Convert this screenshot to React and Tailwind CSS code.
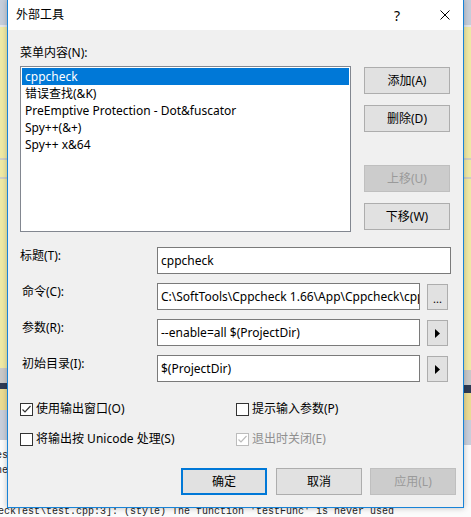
import React from 'react';

const ui = "font-['Noto_Sans','Noto_Sans_CJK_SC',sans-serif] text-[12px] text-black";

function Btn({ children, disabled, primary, className = '' }) {
  const base = 'flex items-center justify-center h-[27px] w-[86px]';
  const look = disabled
    ? 'bg-[#cccccc] border border-[#bfbfbf] text-[#9a9a9a]'
    : primary
    ? 'bg-[#e1e1e1] border-2 border-[#0078d7] text-black'
    : 'bg-[#e1e1e1] border border-[#adadad] text-black';
  return <div className={`${base} ${look} ${className}`}>{children}</div>;
}

function Check({ checked, disabled, label }) {
  const color = disabled ? '#bcbcbc' : '#333333';
  return (
    <div className="flex items-center h-[16px]">
      <div
        className={`w-[13px] h-[13px] border bg-white flex items-center justify-center ${
          disabled ? 'border-[#bcbcbc]' : 'border-[#333333]'
        }`}
      >
        {checked && (
          <svg width="11" height="11" viewBox="0 0 11 11">
            <polyline points="1.5,5.5 4,8 9.5,2" fill="none" stroke={color} strokeWidth="1.2" />
          </svg>
        )}
      </div>
      <span className={`ml-[3px] leading-[16px] ${disabled ? 'text-[#8f8f8f]' : ''}`}>{label}</span>
    </div>
  );
}

function SideBtn({ children }) {
  return (
    <div className="ml-[7px] mt-[1px] w-[21px] h-[26px] bg-[#e1e1e1] border border-[#adadad] flex items-center justify-center">
      {children}
    </div>
  );
}

function Arrow() {
  return (
    <svg width="6" height="9" viewBox="0 0 6 9">
      <polygon points="0,0 5,4.5 0,9" fill="#000" />
    </svg>
  );
}

function Field({ label, value, side, wide, indent }) {
  return (
    <div className="flex items-start h-[27px]">
      <div className={`w-[137px] mt-[1px] leading-[16px] ${indent ? 'pl-[2px]' : ''}`}>{label}</div>
      <div
        className={`h-[27px] ${wide ? 'w-[294px]' : 'w-[263px]'} bg-white border border-[#7a7a7a] flex items-center px-[3px] overflow-hidden whitespace-nowrap`}
      >
        {value}
      </div>
      {side}
    </div>
  );
}

const items = ['cppcheck', '错误查找(&K)', 'PreEmptive Protection - Dot&fuscator', 'Spy++(&+)', 'Spy++ x&64'];

export default function App() {
  return (
    <div className="relative w-[471px] h-[517px] overflow-hidden bg-[#fbfbfb]">
      {/* desktop behind the dialog */}
      <div className="flex h-full justify-between">
        <div className="w-[7px] flex flex-col overflow-hidden">
          <div className="h-[25px] bg-[#c6cedb]" />
          <div className="h-[2px] bg-[#e4e7ec]" />
          <div className="h-[131px] bg-[#f0eaa5]" />
          <div className="h-[2px] bg-[#cfcfc4]" />
          <div className="h-[17px] bg-[#f0eaa5]" />
          <div className="h-[2px] bg-[#cfcfc4]" />
          <div className="h-[189px] bg-[#f0eaa5]" />
          <div className="h-[15px] bg-[#c9c9c9]" />
          <div className="h-[6px] bg-[#2e3b55]" />
          <div className="h-[21px] bg-[#ebdc93]" />
          <div className="h-[30px] bg-[#c9cfdb]" />
          <div className="mt-[8px] ml-[-4px] font-['Liberation_Mono',monospace] text-[10px] leading-[15px] text-[#222]">
            <div>es</div>
            <div>ne</div>
          </div>
        </div>
        <div className="w-[7px] flex flex-col">
          <div className="h-[25px] bg-[#c6cedb]" />
          <div className="h-[2px] bg-[#e4e7ec]" />
          <div className="h-[131px] bg-[#f0eaa5]" />
          <div className="h-[2px] bg-[#cfcfc4]" />
          <div className="h-[17px] bg-[#f0eaa5]" />
          <div className="h-[2px] bg-[#cfcfc4]" />
          <div className="h-[191px] bg-[#f0eaa5]" />
          <div className="h-[15px] bg-[#c9c9c9]" />
          <div className="h-[8px] bg-[#2e3b55]" />
          <div className="h-[27px] bg-[#ebdc93]" />
          <div className="h-[25px] bg-[#c9cfdb]" />
        </div>
      </div>
      <div className="absolute left-[-2px] top-[506px] font-['Liberation_Mono',monospace] text-[10px] leading-[12px] text-[#222] whitespace-nowrap">
        eckTest\test.cpp:3]: (style) The function 'testFunc' is never used
      </div>

      {/* dialog window */}
      <div className={`absolute left-[7px] top-[-1px] w-[457px] h-[509px] border border-[#1883d7] bg-[#f0f0f0] shadow-[0_0_6px_rgba(0,0,0,0.25)] flex flex-col ${ui}`}>
        <div className="h-[30px] bg-white flex items-center pl-[8px]">
          <span className="text-[12px]">外部工具</span>
          <span className="ml-auto mr-[40px] text-[14px]">?</span>
          <svg className="mr-[13px]" width="10" height="10" viewBox="0 0 10 10">
            <path d="M0.5 0.5 L9.5 9.5 M9.5 0.5 L0.5 9.5" stroke="#000" strokeWidth="1" />
          </svg>
        </div>

        <div className="pl-[12px] flex flex-col">
          <div className="mt-[15px] h-[16px] leading-[16px]">菜单内容(N):</div>

          <div className="mt-[5px] flex">
            <div className="w-[331px] h-[166px] bg-white border border-[#828790] p-[1px]">
              {items.map((t, i) => (
                <div
                  key={t}
                  className={`h-[17px] leading-[17px] pl-[3px] whitespace-nowrap ${
                    i === 0 ? 'bg-[#0078d7] text-white' : ''
                  }`}
                >
                  {t}
                </div>
              ))}
            </div>
            <div className="ml-[13px] flex flex-col">
              <Btn className="mt-[1px]">添加(A)</Btn>
              <Btn className="mt-[11px]">删除(D)</Btn>
              <Btn disabled className="mt-[33px]">上移(U)</Btn>
              <Btn className="mt-[11px]">下移(W)</Btn>
            </div>
          </div>

          <div className="mt-[15px] flex flex-col gap-[9px]">
            <Field label="标题(T):" value="cppcheck" wide />
            <Field
              label="命令(C):"
              indent
              value="C:\SoftTools\Cppcheck 1.66\App\Cppcheck\cppcheck.exe"
              side={
                <SideBtn>
                  <span className="text-[11px] leading-[12px] pt-[4px]">...</span>
                </SideBtn>
              }
            />
            <Field
              label="参数(R):"
              indent
              value="--enable=all $(ProjectDir)"
              side={
                <SideBtn>
                  <Arrow />
                </SideBtn>
              }
            />
            <Field
              label="初始目录(I):"
              indent
              value="$(ProjectDir)"
              side={
                <SideBtn>
                  <Arrow />
                </SideBtn>
              }
            />
          </div>

          <div className="mt-[19px] grid grid-cols-[216px_1fr] gap-y-[14px]">
            <Check checked label="使用输出窗口(O)" />
            <Check label="提示输入参数(P)" />
            <Check label="将输出按 Unicode 处理(S)" />
            <Check checked disabled label="退出时关闭(E)" />
          </div>

          <div className="mt-[21px] flex">
            <Btn primary className="ml-[161px]">确定</Btn>
            <Btn className="ml-[9px]">取消</Btn>
            <Btn disabled className="ml-[8px]">应用(L)</Btn>
          </div>
        </div>
      </div>
    </div>
  );
}
